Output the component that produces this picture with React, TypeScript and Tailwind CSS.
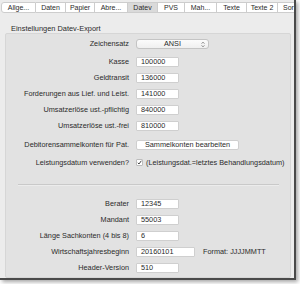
import React from "react";

const tabs: { label: string; w: number; active?: boolean }[] = [
  { label: "Allge...", w: 35 },
  { label: "Daten", w: 30 },
  { label: "Papier", w: 29 },
  { label: "Abre...", w: 33 },
  { label: "Datev", w: 30, active: true },
  { label: "PVS", w: 27 },
  { label: "Mah...", w: 32 },
  { label: "Texte", w: 30 },
  { label: "Texte 2", w: 31 },
  { label: "Sor", w: 30 },
];

function Label({ children }: { children: React.ReactNode }) {
  return <div className="w-[123px] text-right leading-none">{children}</div>;
}

function Field({ value, w = 43 }: { value: string; w?: number }) {
  return (
    <div
      className="h-[10px] bg-white border border-[#cfcfcf] rounded-[1px] flex items-center pl-[4px] leading-none"
      style={{ width: w }}
    >
      {value}
    </div>
  );
}

function Row({ label, children, mt = 0 }: { label: string; children: React.ReactNode; mt?: number }) {
  return (
    <div className="h-[16px] flex items-center gap-[7px]" style={{ marginTop: mt }}>
      <Label>{label}</Label>
      {children}
    </div>
  );
}

export default function App() {
  return (
    <div
      className="w-[300px] h-[284px] bg-white overflow-hidden text-[#2a2a2a] text-[7.3px]"
      style={{ fontFamily: '"Liberation Sans", Arial, sans-serif' }}
    >
      <div className="w-[296px] h-[280px] bg-[#ececec] border-r-[2px] border-b-[2px] border-[#4a4a4a] shadow-[2px_2px_4px_rgba(0,0,0,0.35)] overflow-hidden flex flex-col">
        {/* tab strip */}
        <div className="mt-[2px] ml-[1px] flex h-[11px] w-[400px]">
          {tabs.map((t, i) => (
            <div
              key={t.label}
              className={
                "shrink-0 h-full flex items-center text-[7px] leading-none border-t border-b border-r border-[#cdcdcd] " +
                (i === tabs.length - 1 ? "justify-start pl-[5px] " : "justify-center ") +
                (i === 0 ? "border-l rounded-l-[3px] " : "") +
                (t.active ? "bg-[#dadada]" : "bg-white")
              }
              style={{ width: t.w }}
            >
              {t.label}
            </div>
          ))}
        </div>

        {/* title */}
        <div className="mt-[12px] ml-[11px] h-[9px] leading-none text-[7.4px]">Einstellungen Datev-Export</div>

        {/* group box */}
        <div className="mt-[-1px] ml-[5px] w-[286px] h-[245px] bg-[#e2e2e2] border border-[#d6d6d6] rounded-[2px] pt-[2px]">
          <Row label="Zeichensatz">
            <div className="w-[73px] h-[10px] bg-gradient-to-b from-[#fbfbfb] to-[#efefef] border border-[#c4c4c4] rounded-[3px] relative flex items-center justify-center leading-none">
              <span>ANSI</span>
              <svg className="absolute right-[3px] top-[1px]" width="4" height="7" viewBox="0 0 4 7">
                <path d="M0.5 2.8 L2 1 L3.5 2.8" fill="none" stroke="#8a8a8a" strokeWidth="0.8" />
                <path d="M0.5 4.2 L2 6 L3.5 4.2" fill="none" stroke="#8a8a8a" strokeWidth="0.8" />
              </svg>
            </div>
          </Row>
          <Row label="Kasse" mt={2}>
            <Field value="100000" />
          </Row>
          <Row label="Geldtransit">
            <Field value="136000" />
          </Row>
          <Row label="Forderungen aus Lief. und Leist.">
            <Field value="141000" />
          </Row>
          <Row label="Umsatzerlöse ust.-pflichtig">
            <Field value="840000" />
          </Row>
          <Row label="Umsatzerlöse ust.-frei">
            <Field value="810000" />
          </Row>
          <Row label="Debitorensammelkonten für Pat." mt={3}>
            <div className="w-[103px] h-[10px] bg-white border border-[#cfcfcf] rounded-[2px] flex items-center justify-center leading-none">
              Sammelkonten bearbeiten
            </div>
          </Row>
          <Row label="Leistungsdatum verwenden?" mt={2}>
            <div className="flex items-center gap-[3px] leading-none">
              <div className="w-[7px] h-[7px] bg-white border border-[#bdbdbd] rounded-[1px] flex items-center justify-center">
                <svg width="5" height="5" viewBox="0 0 5 5">
                  <path d="M0.8 2.8 L2 4 L4.3 0.8" fill="none" stroke="#333" strokeWidth="0.9" />
                </svg>
              </div>
              <span>(Leistungsdat.=letztes Behandlungsdatum)</span>
            </div>
          </Row>
          <div className="mt-[13px] ml-[12px] w-[261px] h-[2px] border-t border-[#c9c9c9] bg-[#ececec]" />
          <Row label="Berater" mt={10}>
            <Field value="12345" />
          </Row>
          <Row label="Mandant">
            <Field value="55003" />
          </Row>
          <Row label="Länge Sachkonten (4 bis 8)">
            <Field value="6" />
          </Row>
          <Row label="Wirtschaftsjahresbeginn">
            <div className="flex items-center gap-[8px]">
              <Field value="20160101" w={59} />
              <span className="leading-none">Format: JJJJMMTT</span>
            </div>
          </Row>
          <Row label="Header-Version">
            <Field value="510" />
          </Row>
        </div>
      </div>
    </div>
  );
}
